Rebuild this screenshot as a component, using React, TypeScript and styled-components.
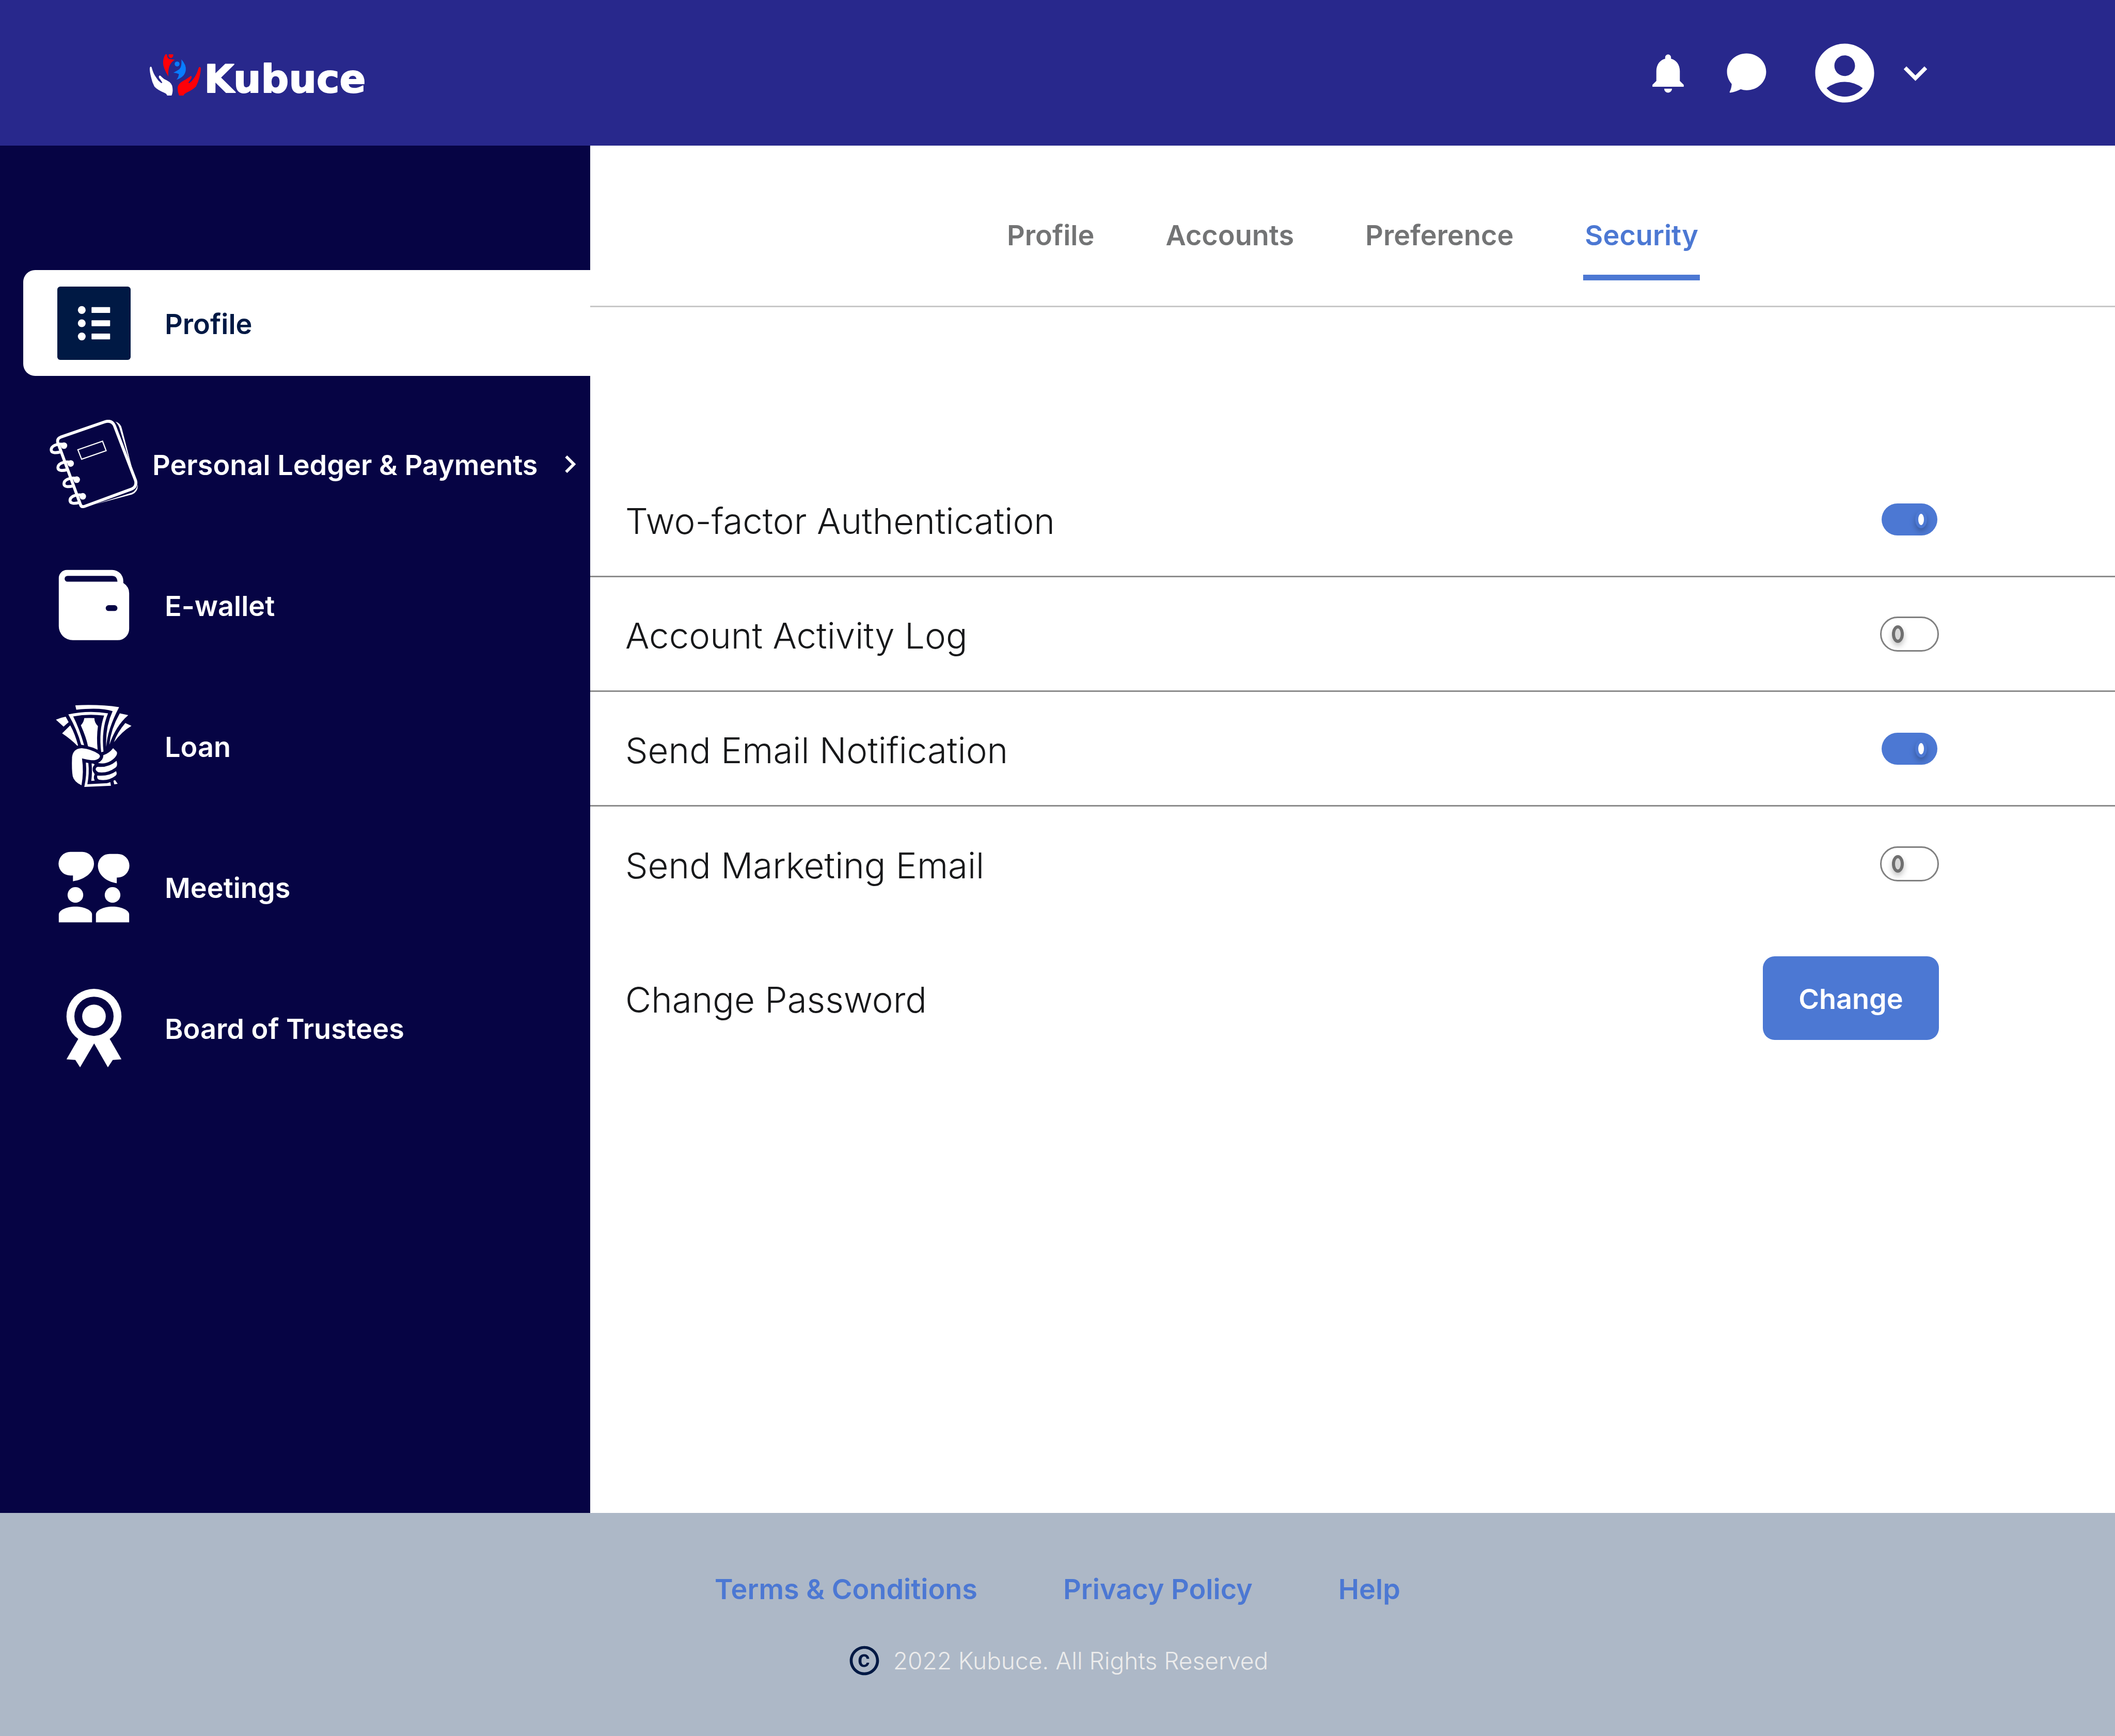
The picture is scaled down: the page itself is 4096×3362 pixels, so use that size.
import React, { useState } from 'react';
import styled, { createGlobalStyle } from 'styled-components';
import {
  MdAccountCircle,
  MdCopyright,
  MdKeyboardArrowDown,
  MdKeyboardArrowRight,
  MdNotifications,
} from 'react-icons/md';

const color = {
  header: '#28288c',
  sidebar: '#060444',
  navy: '#001944',
  blue: '#4c78d3',
  ink: '#17181a',
  grey: '#737475',
  rule: '#8c8c8c',
  softRule: '#c8c8c8',
  footer: '#adb8c7',
  pale: '#ececec',
};

const GlobalStyle = createGlobalStyle`
  *, *::before, *::after { box-sizing: border-box; }
  body {
    margin: 0;
    background: #fff;
    color: ${color.ink};
    font-family: Inter, "Liberation Sans", sans-serif;
    font-size: 54px;
    line-height: 64px;
  }
  button { font: inherit; border: 0; padding: 0; background: none; color: inherit; cursor: pointer; }
  a { color: inherit; text-decoration: none; }
  svg { display: block; flex: none; }
`;

const Page = styled.div`
  min-height: 100vh;
  display: flex;
  flex-direction: column;
`;

const Header = styled.header`
  height: 282px;
  flex: none;
  display: flex;
  align-items: center;
  justify-content: space-between;
  padding: 0 341px 0 289px;
  background: ${color.header};
  color: #fff;
`;

const HeaderActions = styled.div`
  display: flex;
  align-items: center;
  gap: 61px;
`;

const AccountButton = styled.button`
  display: flex;
  align-items: center;
  gap: 23px;
  margin-left: 15px;
`;

const Body = styled.div`
  flex: 1;
  display: flex;
`;

const Sidebar = styled.nav`
  width: 1143px;
  flex: none;
  display: flex;
  flex-direction: column;
  gap: 68px;
  padding: 241px 0 68px 45px;
  background: ${color.sidebar};
`;

const SideLink = styled.a<{ $active?: boolean; $tight?: boolean }>`
  height: 205px;
  display: flex;
  align-items: center;
  gap: ${(p) => (p.$tight ? 28 : 52)}px;
  padding: 0 15px 0 51px;
  border-radius: 23px 0 0 23px;
  background: ${(p) => (p.$active ? '#fff' : 'transparent')};
  color: ${(p) => (p.$active ? color.navy : '#fff')};
  font-weight: 600;
  white-space: nowrap;
`;

const IconSlot = styled.span`
  width: 171px;
  flex: none;
  display: flex;
  justify-content: center;
`;

const SideLabel = styled.span`
  padding-top: 4px;
`;

const Trailing = styled.span`
  margin-left: auto;
`;

const Main = styled.main`
  flex: 1;
  min-width: 0;
`;

const Tabs = styled.nav`
  display: flex;
  justify-content: center;
  gap: 132px;
  padding: 142px 0 49px;
  border-bottom: 3px solid ${color.softRule};
`;

const Tab = styled.a<{ $active?: boolean }>`
  padding: 0 3px 44px;
  border-bottom: 11px solid ${(p) => (p.$active ? color.blue : 'transparent')};
  color: ${(p) => (p.$active ? color.blue : color.grey)};
  font-weight: 600;
`;

const Settings = styled.div`
  padding-top: 301px;
`;

const Row = styled.div<{ $divided?: boolean; $tall?: boolean }>`
  height: ${(p) => (p.$tall ? 298 : 222)}px;
  display: flex;
  align-items: center;
  justify-content: space-between;
  padding: 0 341px 0 68px;
  border-bottom: ${(p) => (p.$divided ? `3px solid ${color.rule}` : '0')};
`;

const RowLabel = styled.label`
  padding-top: 6px;
  font-size: 69px;
  line-height: 88px;
  font-weight: 350;
`;

const Switch = styled.input`
  appearance: none;
  width: 114px;
  height: 68px;
  margin: 0;
  padding: 0 20px;
  display: flex;
  align-items: center;
  justify-content: flex-start;
  border: 3px solid #808080;
  border-radius: 34px;
  background: #fff;
  background-clip: padding-box;
  cursor: pointer;

  &::before {
    content: '';
    width: 23px;
    height: 34px;
    border: 6px solid #6f6f6f;
    border-radius: 50%;
    background: #d8d8d8;
    box-shadow: 0 6px 11px rgba(0, 0, 0, 0.25);
  }

  &:checked {
    justify-content: flex-end;
    border-color: transparent;
    background-color: ${color.blue};
  }

  &:checked::before {
    border-color: ${color.blue};
    background: #fff;
  }
`;

const ChangeButton = styled.button`
  width: 341px;
  height: 162px;
  padding-top: 4px;
  border-radius: 23px;
  background: ${color.blue};
  color: #fff;
  font-weight: 600;
`;

const Footer = styled.footer`
  flex: none;
  display: flex;
  flex-direction: column;
  align-items: center;
  gap: 72px;
  padding: 116px 0 112px;
  background: ${color.footer};
`;

const FooterLinks = styled.nav`
  display: flex;
  gap: 166px;
  color: ${color.blue};
  font-weight: 600;
`;

const Copyright = styled.p`
  margin: 0;
  display: flex;
  align-items: center;
  gap: 22px;
  color: ${color.pale};
  font-size: 46px;
  line-height: 68px;
  font-weight: 300;

  svg { color: ${color.navy}; }
`;

const LogoText = styled.text`
  font-family: "DejaVu Sans", sans-serif;
  font-size: 238px;
  font-weight: 700;
  fill: #fff;
  stroke: #fff;
  stroke-width: 6px;
  stroke-linejoin: round;
`;

const Logo = () => (
  <svg width="430" height="114" viewBox="75 26 1361 360" role="img" aria-label="Kubuce">
    <path fill="#fff" d="M84 168Q90 168 92 180Q99 210 119 237Q130 256 147 268Q154 270 155 266Q147 250 137 240Q130 228 138 223Q144 222 152 232Q164 245 182 252Q218 270 218 300Q221 325 212 345H185Q181 334 168 329Q125 311 107 291Q92 262 86 232Q78 200 78 178Q79 169 84 168Z" />
    <path fill="#ff0008" d="M385 170Q378 170 376 182Q365 218 347 242Q338 258 321 269Q314 271 316 264Q328 250 334 238Q337 226 330 225L315 236Q302 246 285 254Q250 272 249 300Q249 325 258 345H285Q290 334 303 328Q338 313 361 291Q376 262 383 232Q391 200 391 180Q390 170 385 170Z" />
    <path fill="#ff0008" d="M174 93H184Q183 124 214 124L232 126Q186 152 192 228Q160 175 160 145Q160 115 174 93Z" />
    <path fill="#ff0008" d="M195 93H222Q225 103 218 110Q208 119 198 111Q190 103 195 93Z" />
    <circle cx="246" cy="152" r="15" fill="#087cff" />
    <path fill="#087cff" d="M272 124Q303 158 299 190Q293 232 242 248Q254 235 257 214Q242 205 223 206Q238 197 250 190Q277 180 272 124Z" />
    <LogoText x="411" y="326">Kubuce</LogoText>
  </svg>
);

const ChatIcon = () => (
  <svg width="91" height="91" viewBox="-24 -24 288 288" fill="currentColor" aria-hidden="true">
    <path d="M120 0C186 0 240 50 240 112C240 175 188 225 120 225C107 225 95 223 84 219C65 230 42 237 20 240Q14 240 17 233Q27 215 29 187C10 165 0 140 0 112C0 50 54 0 120 0Z" />
  </svg>
);

const ProfileIcon = () => (
  <svg width="142" height="142" viewBox="0 0 150 150" aria-hidden="true">
    <rect width="150" height="150" rx="6" fill={color.navy} />
    <g fill="#fff">
      {[48, 75, 102].map((y) => (
        <React.Fragment key={y}>
          <circle cx="50" cy={y} r="8" />
          <rect x="70" y={y - 6} width="38" height="12" rx="1" />
        </React.Fragment>
      ))}
    </g>
  </svg>
);

const rings = [[0, 0], [41, 109], [78, 208], [115, 310]];

const LedgerIcon = () => (
  <svg width="171" height="171" viewBox="0 0 540 540" fill="none" stroke="#fff" aria-hidden="true">
    <path strokeWidth="18" strokeLinejoin="round" d="M189 519L50 138Q45 115 68 106L336 13Q380 -2 397 36L526 372Q535 408 503 423L212 530Q194 535 189 519Z" />
    <path strokeWidth="7" d="M173 183L324 131L346 189L196 241Z" />
    <path fill="#fff" stroke="none" d="M402 11Q434 20 441 50L519 352L428 52Q420 26 402 11Z" />
    <path fill="#fff" stroke="none" d="M540 396Q542 440 505 456L275 518L503 446Q530 434 540 396Z" />
    {rings.map(([x, y]) => (
      <g key={y} transform={`translate(${x} ${y})`}>
        <path strokeWidth="18" d="M88 151C40 142 10 163 10 183C10 204 38 203 64 197" />
        <circle cx="88" cy="158" r="20" fill="#fff" stroke="none" />
      </g>
    ))}
  </svg>
);

const WalletIcon = () => (
  <svg width="142" height="142" viewBox="111 93 450 450" fill="#fff" aria-hidden="true">
    <path
      fillRule="evenodd"
      d="M120 152A50 50 0 0 1 170 102H448A68 68 0 0 1 516 170V182Q552 205 552 245V462A70 70 0 0 1 482 533H206A86 86 0 0 1 120 447ZM174 138A18 18 0 0 0 174 174H480Q478 138 446 138ZM426 318A18 18 0 0 0 426 354H462A18 18 0 0 0 462 318Z"
    />
  </svg>
);

const LoanIcon = () => (
  <svg width="159" height="159" viewBox="84 930 504 504" fill="#fff" aria-hidden="true">
    <path d="M223 933Q370 926 492 944Q420 1080 413 1188Q406 1070 452 969Q380 944 229 960Z" />
    <path fillRule="evenodd" d="M180 989Q300 962 424 982Q382 1080 396 1217L382 1221Q366 1090 400 996Q300 984 210 1001Q250 1080 277 1178L259 1175Q235 1085 180 989Z" />
    <path d="M278 1012Q308 1009 340 1012Q340 1040 362 1061Q352 1130 360 1206Q332 1190 301 1184Q290 1130 257 1056Q276 1036 278 1012Z" />
    <path d="M104 1021Q134 1008 164 1003L182 1036L151 1064Z" />
    <path d="M192 1056L142 1105Q195 1140 235 1181L240 1180Q222 1110 192 1056Z" />
    <path d="M496 982L548 993Q470 1060 432 1176Q440 1080 496 982Z" />
    <path d="M530 1042L568 1059Q510 1092 460 1160Q480 1100 530 1042Z" />
    <path d="M262 1196Q320 1200 366 1232Q382 1244 368 1258Q350 1272 322 1270Q295 1267 264 1259Q276 1340 261 1424Q215 1402 207 1368Q200 1330 203 1250Q210 1198 262 1196Z" />
    <path d="M455 1196L478 1219Q486 1243 440 1275Q400 1298 362 1286Q396 1270 395 1239Q430 1228 455 1196Z" />
    <path d="M476 1274Q486 1305 468 1317Q420 1352 364 1344Q340 1330 352 1315Q358 1308 368 1311Q430 1315 476 1274Z" />
    <path d="M473 1337Q483 1355 468 1367Q425 1400 368 1390Q353 1380 358 1364Q430 1370 473 1337Z" />
    <path d="M288 1284L303 1287Q310 1350 297 1417Q360 1414 418 1411L438 1405L442 1427L278 1434Q295 1360 288 1284Z" />
    <path d="M323 1290L335 1291L342 1298Q326 1310 330 1336L342 1356Q332 1375 342 1395L321 1397Q328 1345 323 1290Z" />
    <path d="M457 1396L467 1392L483 1415L462 1418Z" />
  </svg>
);

const MeetingsIcon = () => (
  <svg width="142" height="142" viewBox="111 111 450 450" fill="#fff" aria-hidden="true">
    <path d="M191 120H264A72 72 0 0 1 336 192C336 245 280 290 207 300V265H191A72 72 0 0 1 191 120Z" />
    <path d="M432 132H481A72 72 0 0 1 481 277H476V312C410 303 360 260 360 204A72 72 0 0 1 432 132Z" />
    <circle cx="222" cy="384" r="48" />
    <circle cx="450" cy="384" r="48" />
    <path d="M120 552V504C120 480 165 456 222 456S324 480 324 504V552Z" />
    <path d="M348 552V504C348 480 393 456 450 456S552 480 552 504V552Z" />
  </svg>
);

const BoardIcon = () => (
  <svg width="152" height="152" viewBox="96 960 480 480" fill="#fff" aria-hidden="true">
    <path
      fillRule="evenodd"
      d="M336 960A168 168 0 0 1 432 1266L504 1391L451 1395L421 1440L337 1294L251 1440L222 1395L168 1391L240 1266A168 168 0 0 1 336 960ZM336 1008A120 120 0 0 0 336 1248A120 120 0 0 0 336 1008Z"
    />
    <circle cx="336" cy="1128" r="72" />
  </svg>
);

const sideItems = [
  { label: 'Profile', Icon: ProfileIcon, active: true },
  { label: 'Personal Ledger & Payments', Icon: LedgerIcon, nested: true },
  { label: 'E-wallet', Icon: WalletIcon },
  { label: 'Loan', Icon: LoanIcon },
  { label: 'Meetings', Icon: MeetingsIcon },
  { label: 'Board of Trustees', Icon: BoardIcon },
];

const tabs = ['Profile', 'Accounts', 'Preference', 'Security'];

const initialSettings = [
  { id: 'two-factor', label: 'Two-factor Authentication', on: true },
  { id: 'activity-log', label: 'Account Activity Log', on: false },
  { id: 'email-notification', label: 'Send Email Notification', on: true },
  { id: 'marketing-email', label: 'Send Marketing Email', on: false },
];

export default function App() {
  const [settings, setSettings] = useState(initialSettings);

  const toggle = (id: string) =>
    setSettings((all) => all.map((s) => (s.id === id ? { ...s, on: !s.on } : s)));

  return (
    <>
      <GlobalStyle />
      <Page>
        <Header>
          <a href="#home"><Logo /></a>
          <HeaderActions>
            <button type="button" aria-label="Notifications"><MdNotifications size={91} /></button>
            <button type="button" aria-label="Messages"><ChatIcon /></button>
            <AccountButton type="button" aria-label="Account">
              <MdAccountCircle size={137} />
              <MdKeyboardArrowDown size={91} />
            </AccountButton>
          </HeaderActions>
        </Header>

        <Body>
          <Sidebar aria-label="Sections">
            {sideItems.map(({ label, Icon, active, nested }) => (
              <SideLink key={label} href="#section" $active={active} $tight={nested}>
                <IconSlot><Icon /></IconSlot>
                <SideLabel>{label}</SideLabel>
                {nested && <Trailing><MdKeyboardArrowRight size={68} /></Trailing>}
              </SideLink>
            ))}
          </Sidebar>

          <Main>
            <Tabs aria-label="Profile pages">
              {tabs.map((tab) => (
                <Tab key={tab} href="#tab" $active={tab === 'Security'}>{tab}</Tab>
              ))}
            </Tabs>

            <Settings>
              {settings.map(({ id, label, on }, i) => (
                <Row key={id} $divided={i < settings.length - 1}>
                  <RowLabel htmlFor={id}>{label}</RowLabel>
                  <Switch id={id} type="checkbox" checked={on} onChange={() => toggle(id)} />
                </Row>
              ))}
              <Row $tall>
                <RowLabel htmlFor="change-password">Change Password</RowLabel>
                <ChangeButton id="change-password" type="button">Change</ChangeButton>
              </Row>
            </Settings>
          </Main>
        </Body>

        <Footer>
          <FooterLinks aria-label="Legal">
            <a href="#terms">Terms &amp; Conditions</a>
            <a href="#privacy">Privacy Policy</a>
            <a href="#help">Help</a>
          </FooterLinks>
          <Copyright>
            <MdCopyright size={68} />
            2022 Kubuce. All Rights Reserved
          </Copyright>
        </Footer>
      </Page>
    </>
  );
}
